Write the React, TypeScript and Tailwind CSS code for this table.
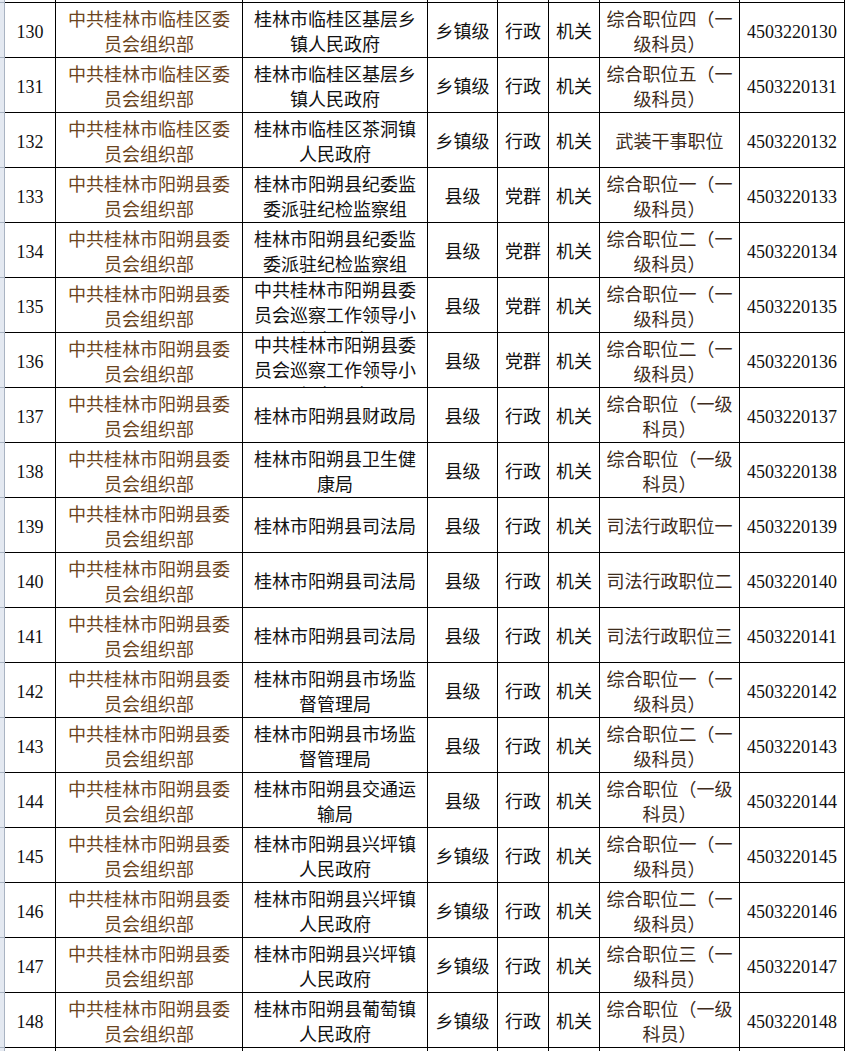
import React from "react";

type Row = {
  n: string;
  a: string;
  b: string;
  c: string;
  d: string;
  e: string;
  f: string;
  g: string;
  overflow?: boolean;
};

const A1 = "中共桂林市临桂区委员会组织部";
const A2 = "中共桂林市阳朔县委员会组织部";

const rows: Row[] = [
  { n: "130", a: A1, b: "桂林市临桂区基层乡镇人民政府", c: "乡镇级", d: "行政", e: "机关", f: "综合职位四（一级科员）", g: "4503220130" },
  { n: "131", a: A1, b: "桂林市临桂区基层乡镇人民政府", c: "乡镇级", d: "行政", e: "机关", f: "综合职位五（一级科员）", g: "4503220131" },
  { n: "132", a: A1, b: "桂林市临桂区茶洞镇人民政府", c: "乡镇级", d: "行政", e: "机关", f: "武装干事职位", g: "4503220132" },
  { n: "133", a: A2, b: "桂林市阳朔县纪委监委派驻纪检监察组", c: "县级", d: "党群", e: "机关", f: "综合职位一（一级科员）", g: "4503220133" },
  { n: "134", a: A2, b: "桂林市阳朔县纪委监委派驻纪检监察组", c: "县级", d: "党群", e: "机关", f: "综合职位二（一级科员）", g: "4503220134" },
  { n: "135", a: A2, b: "中共桂林市阳朔县委员会巡察工作领导小组办公室", c: "县级", d: "党群", e: "机关", f: "综合职位一（一级科员）", g: "4503220135", overflow: true },
  { n: "136", a: A2, b: "中共桂林市阳朔县委员会巡察工作领导小组办公室", c: "县级", d: "党群", e: "机关", f: "综合职位二（一级科员）", g: "4503220136", overflow: true },
  { n: "137", a: A2, b: "桂林市阳朔县财政局", c: "县级", d: "行政", e: "机关", f: "综合职位（一级科员）", g: "4503220137" },
  { n: "138", a: A2, b: "桂林市阳朔县卫生健康局", c: "县级", d: "行政", e: "机关", f: "综合职位（一级科员）", g: "4503220138" },
  { n: "139", a: A2, b: "桂林市阳朔县司法局", c: "县级", d: "行政", e: "机关", f: "司法行政职位一", g: "4503220139" },
  { n: "140", a: A2, b: "桂林市阳朔县司法局", c: "县级", d: "行政", e: "机关", f: "司法行政职位二", g: "4503220140" },
  { n: "141", a: A2, b: "桂林市阳朔县司法局", c: "县级", d: "行政", e: "机关", f: "司法行政职位三", g: "4503220141" },
  { n: "142", a: A2, b: "桂林市阳朔县市场监督管理局", c: "县级", d: "行政", e: "机关", f: "综合职位一（一级科员）", g: "4503220142" },
  { n: "143", a: A2, b: "桂林市阳朔县市场监督管理局", c: "县级", d: "行政", e: "机关", f: "综合职位二（一级科员）", g: "4503220143" },
  { n: "144", a: A2, b: "桂林市阳朔县交通运输局", c: "县级", d: "行政", e: "机关", f: "综合职位（一级科员）", g: "4503220144" },
  { n: "145", a: A2, b: "桂林市阳朔县兴坪镇人民政府", c: "乡镇级", d: "行政", e: "机关", f: "综合职位一（一级科员）", g: "4503220145" },
  { n: "146", a: A2, b: "桂林市阳朔县兴坪镇人民政府", c: "乡镇级", d: "行政", e: "机关", f: "综合职位二（一级科员）", g: "4503220146" },
  { n: "147", a: A2, b: "桂林市阳朔县兴坪镇人民政府", c: "乡镇级", d: "行政", e: "机关", f: "综合职位三（一级科员）", g: "4503220147" },
  { n: "148", a: A2, b: "桂林市阳朔县葡萄镇人民政府", c: "乡镇级", d: "行政", e: "机关", f: "综合职位（一级科员）", g: "4503220148" },
];

const grid =
  "grid grid-cols-[5px_51px_187px_185px_70px_51px_51px_140px_105px]";

const cell =
  "border-r border-black flex items-center justify-center text-center pt-[5px] overflow-hidden";

function Spacer({ h, bottom }: { h: string; bottom: boolean }) {
  return (
    <div className={`${grid} ${h}`}>
      <div className={`bg-[#e4e9f1] border-r border-[#a9b3c2] ${bottom ? "border-b border-b-[#a9b3c2]" : ""}`} />
      {Array.from({ length: 8 }).map((_, i) => (
        <div key={i} className={`border-r border-black ${bottom ? "border-b" : ""}`} />
      ))}
    </div>
  );
}

function TableRow({ r }: { r: Row }) {
  return (
    <div className={`${grid} h-[55px]`}>
      <div className="bg-[#e4e9f1] border-r border-[#a9b3c2] border-b border-b-[#a9b3c2]" />
      <div className={`${cell} border-b`}>{r.n}</div>
      <div className={`${cell} border-b px-[6px] text-[#6b4420]`}>{r.a}</div>
      {r.overflow ? (
        <div className="border-r border-b border-black flex items-start justify-center text-center px-[6px] pt-[1px] overflow-hidden">
          {r.b}
        </div>
      ) : (
        <div className={`${cell} border-b px-[6px]`}>{r.b}</div>
      )}
      <div className={`${cell} border-b`}>{r.c}</div>
      <div className={`${cell} border-b`}>{r.d}</div>
      <div className={`${cell} border-b`}>{r.e}</div>
      <div className={`${cell} border-b px-[2px] text-[#3e2c1c]`}>{r.f}</div>
      <div className={`${cell} border-b`}>{r.g}</div>
    </div>
  );
}

export default function App() {
  return (
    <div className="w-[846px] h-[1051px] overflow-hidden bg-white text-[18px] leading-[25px] text-[#111] font-['Liberation_Serif','Noto_Sans_CJK_SC',serif]">
      <Spacer h="h-[3px]" bottom={true} />
      {rows.map((r) => (
        <TableRow key={r.n} r={r} />
      ))}
      <Spacer h="h-[10px]" bottom={false} />
    </div>
  );
}
